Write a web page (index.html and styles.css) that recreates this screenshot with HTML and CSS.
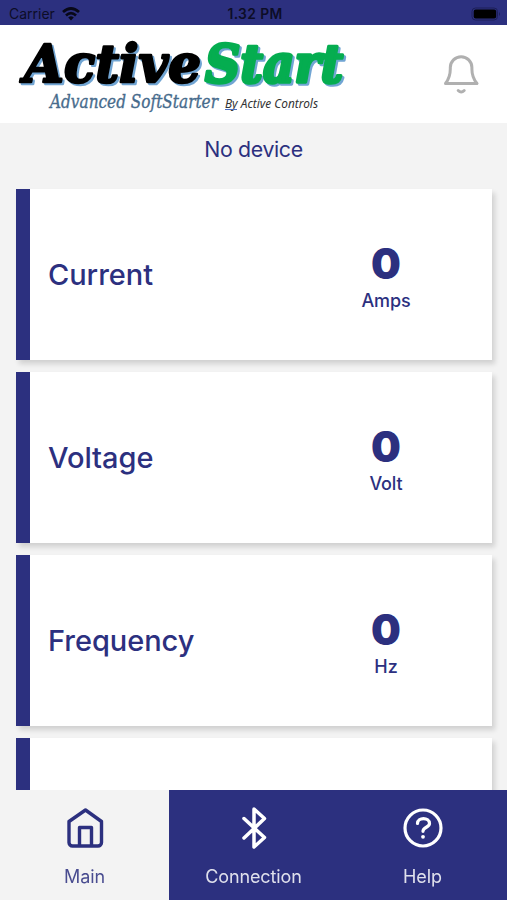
FILE: index.html
```html
<!DOCTYPE html>
<html lang="en">
<head>
<meta charset="utf-8">
<title>ActiveStart</title>
<link rel="stylesheet" href="styles.css">
</head>
<body>
<div class="app">
  <div class="status">
    <div class="carrier"><span>Carrier</span>
      <svg width="18" height="14" viewBox="0 0 18 14" fill="none" stroke="#080818" stroke-width="2.7"><path d="M1 5.1Q9-2.1 17 5.1M4 8.4Q9 3.9 14 8.4"/><path d="M6.2 10.4Q9 8.2 11.8 10.4L9 13.5Z" fill="#080818" stroke="none"/></svg>
    </div>
    <div class="clock">1.32 PM</div>
    <svg class="battery" width="30" height="14" viewBox="0 0 30 14"><rect x="1" y="1" width="25.500" height="12" rx="3.500" fill="none" stroke="#1c1f59"/><rect x="2.700" y="2.500" width="22.500" height="9" rx="2" fill="#000"/><path d="M28 5Q30 7 28 9Z" fill="#1c1f59"/></svg>
  </div>
  <header class="header">
    <svg class="logo" width="340" height="98" viewBox="0 0 340 98">
      <text class="logo-title logo-active" x="24" y="57" textLength="177" lengthAdjust="spacingAndGlyphs">Active</text>
      <text class="logo-title logo-start" x="205" y="57" textLength="138" lengthAdjust="spacingAndGlyphs">Start</text>
      <text class="logo-sub" x="50" y="83" textLength="168" lengthAdjust="spacingAndGlyphs">Advanced SoftStarter</text>
      <text class="logo-by" x="225" y="83" textLength="93" lengthAdjust="spacingAndGlyphs">By Active Controls</text>
      <path d="M225 84.500H237" stroke="#4c70c4"/>
    </svg>
    <svg class="bell" width="40" height="44" viewBox="0 0 40 44" fill="none" stroke="#b0b0b0" stroke-width="3" stroke-linejoin="round" stroke-linecap="round"><path d="M4.500 31.500C8 27 9.300 23 9.300 17V15.500A10.800 10.800 0 0 1 30.900 15.500V17C30.900 23 32.200 27 36 31.500Z"/><path d="M17.200 38.500Q20.200 41.500 23.200 38.500"/></svg>
  </header>
  <main class="content">
    <div class="device">No device</div>
    <section class="cards">
      <article class="card"><h2>Current</h2><div class="reading"><strong>0</strong><span>Amps</span></div></article>
      <article class="card"><h2>Voltage</h2><div class="reading"><strong>0</strong><span>Volt</span></div></article>
      <article class="card"><h2>Frequency</h2><div class="reading"><strong>0</strong><span>Hz</span></div></article>
      <article class="card"></article>
    </section>
  </main>
  <nav class="tabs">
    <a class="tab active">
      <svg width="44" height="44" viewBox="0 0 44 44" fill="none" stroke="currentColor" stroke-width="3.400" stroke-linejoin="round"><path d="M22.500 4L38.500 15.500V36.500A3.500 3.500 0 0 1 35 40H9.500A3.500 3.500 0 0 1 6 36.500V15.500Z"/><path d="M16.500 39.500V21.500H28.500V39.500"/></svg>
      <span>Main</span></a>
    <a class="tab">
      <svg width="44" height="44" viewBox="0 0 44 44" fill="none" stroke="currentColor" stroke-width="3.500" stroke-linejoin="round" stroke-linecap="round"><path d="M12 12.500L32.500 31.500L22 41V3L32.500 12.500L12 32"/></svg>
      <span>Connection</span></a>
    <a class="tab">
      <svg width="44" height="44" viewBox="0 0 44 44" fill="none" stroke="currentColor" stroke-width="3.200" stroke-linecap="round"><circle cx="22" cy="22" r="18"/><path d="M16.500 17.500C16.500 11 28.500 11 28.500 17.500C28.500 21.500 22 21 22 25.300"/><circle cx="22" cy="30.800" r="1.900" fill="currentColor" stroke="none"/></svg>
      <span>Help</span></a>
  </nav>
</div>
</body>
</html>
```
FILE: styles.css
```css
* { box-sizing: border-box; }
body { margin: 0; font-family: Inter, sans-serif; color: #2c307f; }
.app { height: 900px; display: flex; flex-direction: column; overflow: hidden; background: #f3f3f3; }
.status { height: 25px; flex: none; display: grid; grid-template-columns: 1fr auto 1fr; align-items: center; padding: 2px 6px 0 9px; background: #2c307f; color: #0c0d27; font-size: 14px; }
.carrier { display: flex; align-items: center; gap: 7px; }
.clock { font-weight: 600; font-size: 13.8px; letter-spacing: .4px; }
.battery { justify-self: end; }
.header { height: 98px; flex: none; display: flex; justify-content: space-between; background: #fff; }
.logo { overflow: visible; }
.logo-title { font: italic bold 53px "DejaVu Serif", serif; stroke-width: 2.6; stroke-linejoin: round; filter: drop-shadow(2.5px 2.5px 0 #71a5d3); }
.logo-active { fill: #000; stroke: #000; }
.logo-start { fill: #05ad50; stroke: #05ad50; stroke-width: 3.4; }
.logo-sub { font: italic 18px "DejaVu Serif", serif; fill: #476b8c; stroke: #476b8c; stroke-width: .35; }
.logo-by { font: italic 12px "Noto Sans", sans-serif; fill: #333; }
.bell { margin: 27px 26px 0 0; }
.content { flex: 1; min-height: 0; overflow: hidden; }
.device { height: 66px; padding-top: 13px; text-align: center; font-size: 21.3px; letter-spacing: -.35px; line-height: 26px; }
.cards { display: flex; flex-direction: column; gap: 12px; padding: 0 15px 0 16px; }
.card { height: 171px; flex: none; display: flex; align-items: center; justify-content: space-between; padding: 0 50px 0 18px; border-left: 14px solid #2c307f; background: #fff; box-shadow: 3px 4px 5px rgba(0, 0, 0, .14); }
.card h2 { margin: 0; font-size: 29px; font-weight: 500; letter-spacing: -.05px; }
.reading { width: 112px; display: flex; flex-direction: column; align-items: center; padding-top: 5px; }
.reading strong { font-size: 42px; font-weight: 900; line-height: 43px; }
.reading span { font-size: 18px; font-weight: 500; letter-spacing: -.1px; line-height: 24px; margin-top: 4px; }
.tabs { height: 110px; flex: none; display: grid; grid-template-columns: repeat(3, 1fr); background: #2c307f; color: #fff; }
.tab { display: flex; flex-direction: column; align-items: center; padding-top: 16px; }
.tab span { margin-top: 15px; font-size: 18px; letter-spacing: -.1px; line-height: 24px; opacity: .85; }
.tab.active { background: #f3f3f3; color: #2c307f; }
```
